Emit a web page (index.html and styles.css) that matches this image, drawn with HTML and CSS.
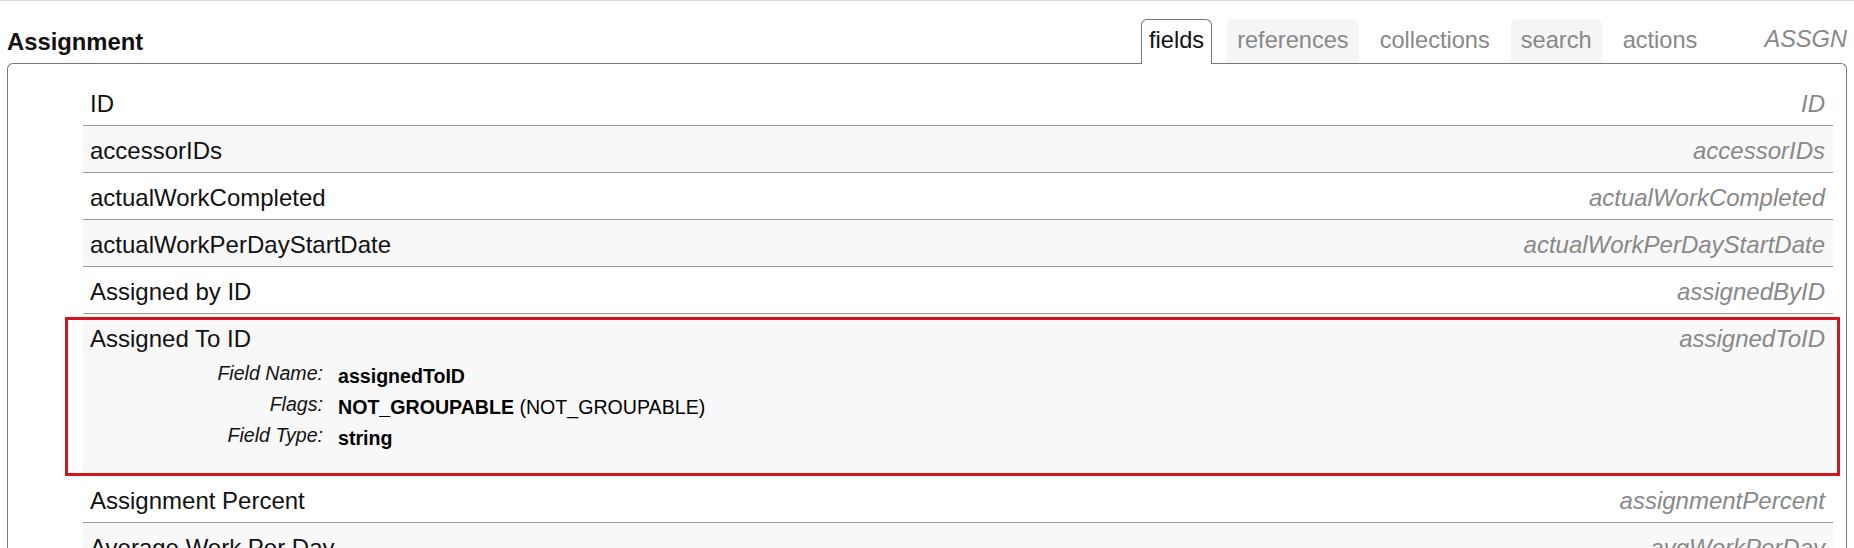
FILE: index.html
```html
<!DOCTYPE html>
<html lang="en">
<head>
<meta charset="utf-8">
<title>Assignment</title>
<link rel="stylesheet" href="styles.css">
</head>
<body>
<div class="topline"></div>
<div class="page">
  <div class="header">
    <h1 class="title">Assignment</h1>
    <nav class="tabs">
      <span class="tab active">fields</span>
      <span class="tab shaded">references</span>
      <span class="tab">collections</span>
      <span class="tab shaded">search</span>
      <span class="tab">actions</span>
      <span class="code">ASSGN</span>
    </nav>
  </div>
  <div class="panel">
    <div class="row"><div class="row-head"><span class="label">ID</span><span class="key">ID</span></div></div>
    <div class="row"><div class="row-head"><span class="label">accessorIDs</span><span class="key">accessorIDs</span></div></div>
    <div class="row"><div class="row-head"><span class="label">actualWorkCompleted</span><span class="key">actualWorkCompleted</span></div></div>
    <div class="row"><div class="row-head"><span class="label">actualWorkPerDayStartDate</span><span class="key">actualWorkPerDayStartDate</span></div></div>
    <div class="row"><div class="row-head"><span class="label">Assigned by ID</span><span class="key">assignedByID</span></div></div>
    <div class="row selected">
      <div class="row-head"><span class="label">Assigned To ID</span><span class="key">assignedToID</span></div>
      <div class="details">
        <span class="dt">Field Name:</span><span class="dd"><b>assignedToID</b></span>
        <span class="dt">Flags:</span><span class="dd"><b>NOT_GROUPABLE</b> (NOT_GROUPABLE)</span>
        <span class="dt">Field Type:</span><span class="dd"><b>string</b></span>
      </div>
    </div>
    <div class="row"><div class="row-head"><span class="label">Assignment Percent</span><span class="key">assignmentPercent</span></div></div>
    <div class="row"><div class="row-head"><span class="label">Average Work Per Day</span><span class="key">avgWorkPerDay</span></div></div>
    <div class="row"><div class="row-head"><span class="label">Baseline Work</span><span class="key">baselineWork</span></div></div>
  </div>
</div>
</body>
</html>
```
FILE: styles.css
```css
html, body {
  margin: 0;
  padding: 0;
  background: #fff;
}
body {
  font-family: "Liberation Sans", Arial, sans-serif;
  color: #111;
  overflow: hidden;
}
.topline {
  height: 1px;
  background: #d4d4d4;
}
.page {
  padding: 0 7px;
}
.header {
  display: flex;
  justify-content: space-between;
  align-items: flex-end;
  height: 62px;
}
.title {
  margin: 0 0 8px 0;
  font-size: 23.8px;
  line-height: 27px;
  font-weight: bold;
  color: #111;
}
.tabs {
  display: flex;
  align-items: flex-end;
  gap: 11px;
}
.tab {
  font-size: 23.6px;
  line-height: 27px;
  color: #888;
  padding: 7px 9px 9px;
  border: 1px solid transparent;
  border-bottom: none;
  border-radius: 6px 6px 0 0;
}
.tab.shaded {
  background: #f5f5f5;
}
.tab.active {
  color: #111;
  background: #fff;
  border-color: #777;
  padding: 7px 7px 10px;
  margin-bottom: -1px;
  margin-right: 4px;
  position: relative;
  z-index: 1;
}
.code {
  font-size: 23.6px;
  line-height: 27px;
  font-style: italic;
  color: #888;
  margin-left: 46px;
  padding-bottom: 10px;
}
.panel {
  border: 1px solid #777;
  border-bottom: none;
  border-radius: 6px 6px 0 0;
  padding: 15px 13px 0 75px;
}
.row {
  border-bottom: 1px solid #999;
  padding: 11px 8px 8px 7px;
}
.row:nth-child(even) {
  background: #f8f8f8;
}
.row-head {
  display: flex;
  justify-content: space-between;
  font-size: 24px;
  line-height: 27px;
}
.key {
  font-style: italic;
  color: #888;
}
.row.selected {
  position: relative;
}
.row.selected::after {
  content: "";
  position: absolute;
  left: -18px;
  right: -7px;
  top: 3px;
  bottom: -1px;
  border: 3px solid #d2161e;
  pointer-events: none;
}
.details {
  display: grid;
  grid-template-columns: 233px auto;
  column-gap: 15px;
  align-items: start;
  margin: 9px 0 13px;
  font-size: 19.6px;
  color: #000;
}
.dt {
  font-style: italic;
  text-align: right;
  color: #111;
  line-height: 25px;
}
.dd {
  line-height: 31px;
}
.dd b {
  font-weight: bold;
}
```
